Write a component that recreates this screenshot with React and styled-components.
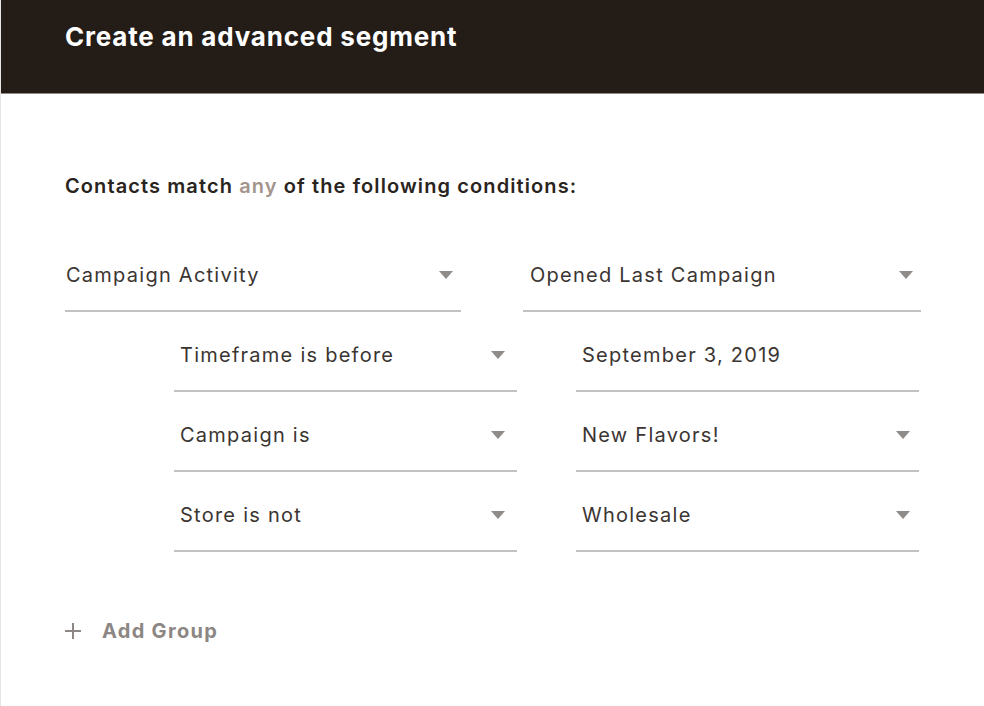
import styled, { createGlobalStyle } from "styled-components";

const GlobalStyle = createGlobalStyle`
  body {
    margin: 0;
    background: #ffffff;
    font-family: Inter, "Liberation Sans", sans-serif;
  }
`;

const Page = styled.div`
  width: 984px;
  height: 706px;
  border-left: 1px solid #e6e6e6;
  box-sizing: border-box;
  background: #fff;
  overflow: hidden;
`;

const Header = styled.header`
  height: 94px;
  background: #231c17;
  border-bottom: 1px solid #8f8a86;
  box-sizing: border-box;
  padding: 21px 0 0 64px;
`;

const Title = styled.h1`
  margin: 0;
  color: #ffffff;
  font-size: 26px;
  font-weight: 700;
  line-height: 32px;
  letter-spacing: 0.8px;
`;

const Body = styled.div`
  padding: 80px 0 0 64px;
`;

const Lead = styled.p`
  margin: 0 0 57px;
  font-size: 20px;
  font-weight: 600;
  line-height: 24px;
  letter-spacing: 1.1px;
  color: #2a2420;
`;

const Any = styled.span`
  color: #a3948c;
`;

const Row = styled.div`
  display: grid;
  grid-template-columns: ${(p) => p.$cols};
  column-gap: ${(p) => p.$gap};
  margin-left: ${(p) => p.$indent || "0px"};
  margin-bottom: 23px;
`;

const Field = styled.div`
  display: flex;
  align-items: center;
  justify-content: space-between;
  padding: 8px ${(p) => p.$right || "8px"} 23px ${(p) => p.$left || "6px"};
  border-bottom: 2px solid #c4c2c0;
  font-size: 20px;
  line-height: 24px;
  letter-spacing: 1.25px;
  color: #3b3532;
`;

const Caret = styled.span`
  width: 0;
  height: 0;
  border-left: 7px solid transparent;
  border-right: 7px solid transparent;
  border-top: 8px solid #8e8b89;
`;

const AddGroup = styled.button`
  display: flex;
  align-items: center;
  gap: 21px;
  margin-top: 67px;
  padding: 0;
  border: none;
  background: none;
  font-family: inherit;
  font-size: 20px;
  font-weight: 700;
  line-height: 24px;
  letter-spacing: 1.3px;
  color: #8c8784;
  cursor: pointer;
`;

function Select({ label, caret = true, left, right }) {
  return (
    <Field $left={left} $right={right}>
      <span>{label}</span>
      {caret && <Caret />}
    </Field>
  );
}

const rules = [
  ["Timeframe is before", "September 3, 2019", false],
  ["Campaign is", "New Flavors!", true],
  ["Store is not", "Wholesale", true],
];

export default function App() {
  return (
    <Page>
      <GlobalStyle />
      <Header>
        <Title>Create an advanced segment</Title>
      </Header>
      <Body>
        <Lead>
          Contacts match <Any>any</Any> of the following conditions:
        </Lead>
        <Row $cols="396px 398px" $gap="62px">
          <Select label="Campaign Activity" left="1px" />
          <Select label="Opened Last Campaign" left="7px" />
        </Row>
        {rules.map(([a, b, caret]) => (
          <Row key={a} $cols="343px 343px" $gap="59px" $indent="109px">
            <Select label={a} right="12px" />
            <Select label={b} caret={caret} right="9px" />
          </Row>
        ))}
        <AddGroup>
          <svg width="16" height="16" viewBox="0 0 16 16">
            <path d="M8 0v16M0 8h16" stroke="#8c8784" strokeWidth="2" />
          </svg>
          Add Group
        </AddGroup>
      </Body>
    </Page>
  );
}
